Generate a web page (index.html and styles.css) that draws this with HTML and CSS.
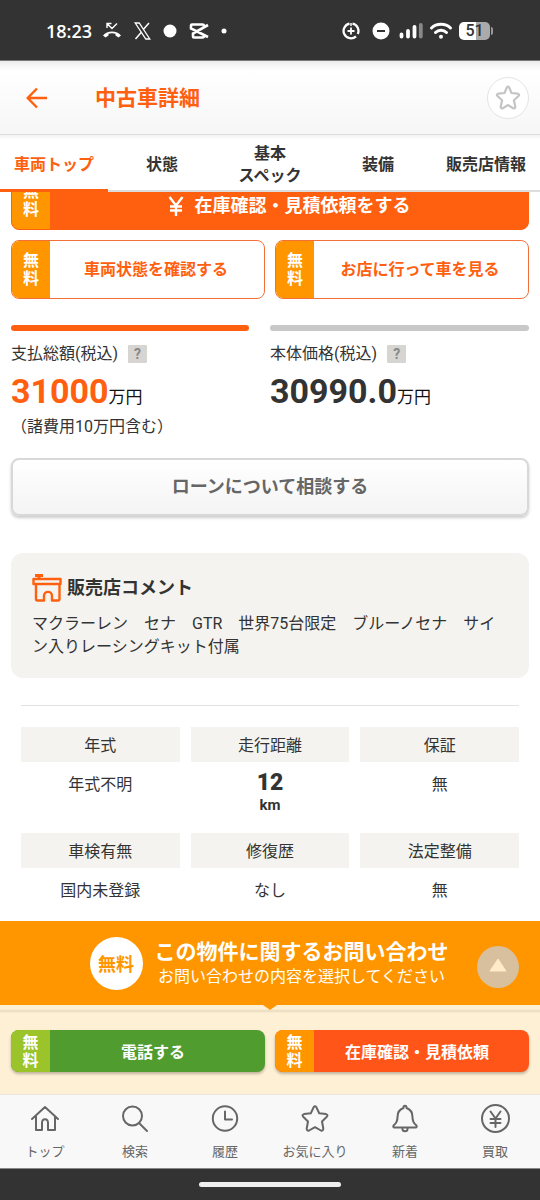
FILE: index.html
```html
<!DOCTYPE html>
<html lang="ja">
<head>
<meta charset="utf-8">
<meta name="viewport" content="width=device-width, initial-scale=1">
<title>中古車詳細</title>
<link rel="stylesheet" href="styles.css">
</head>
<body>
<div class="status">
  <div class="status-group status-left">
    <span class="clock">18:23</span>
    <svg width="20" height="18" viewBox="0 0 20 18" fill="none"><path d="M1 13.5C5 8.300 15 8.300 19 13.500L16.500 15.500L13.500 13.500V11.700C11.500 11 8.500 11 6.500 11.700V13.500L3.500 15.500Z" fill="#fff"/><path d="M15 1.500L10 6.500L5.500 2M5 6V1.500H9.500" stroke="#fff" stroke-width="1.400"/></svg>
    <svg width="17" height="18" viewBox="0 0 17 18" fill="none" stroke="#fff"><path d="M1.200 1H5.200L15.800 17H11.800Z" stroke-width="1.300"/><path d="M15 1L9.300 7.600M7.600 10L1.500 17" stroke-width="1.500"/></svg>
    <svg width="14" height="14" viewBox="0 0 14 14"><circle cx="7" cy="7" r="6.500" fill="#fff"/></svg>
    <svg width="20" height="18" viewBox="0 0 20 18" fill="none" stroke="#fff" stroke-width="2.600"><path d="M19 3L4 11.500V14.500Q4 15.500 5 15.500H13.500Q15 15.500 15 14V12.500M19 15L2 6.500V3.500Q2 2.500 3 2.500H13.500Q15 2.500 15 4V5.500"/></svg>
    <svg width="6" height="6" viewBox="0 0 6 6"><circle cx="3" cy="3" r="2.500" fill="#fff"/></svg>
  </div>
  <div class="status-group">
    <svg class="saver" width="18" height="18" viewBox="0 0 18 18" fill="none" stroke="#fff"><path d="M10.500 1.700A7.400 7.400 0 0 1 15.800 12M14 14.400A7.400 7.400 0 1 1 7.500 1.700" stroke-width="2.300"/><path d="M9 5.500V12.500M5.500 9H12.500" stroke-width="1.800"/><path d="M9 1V4" stroke-width="1.500"/></svg>
    <svg class="dnd" width="18" height="18" viewBox="0 0 18 18"><circle cx="9" cy="9" r="8.500" fill="#fff"/><path d="M5 9H13" stroke="#333" stroke-width="2"/></svg>
    <svg width="24" height="18" viewBox="0 0 24 18" fill="none" stroke-width="3.800" stroke-linecap="round"><path d="M2.500 12.500V14.500M9 9V14.500M15.500 5V14.500" stroke="#fff"/><path d="M21.800 3V14.500" stroke="#888"/></svg>
    <svg width="22" height="18" viewBox="0 0 22 18" fill="none" stroke="#fff" stroke-width="2.900" stroke-linecap="round"><path d="M1.500 6C6.500 1 15.500 1 20.500 6M5.500 10.500C8.500 7.500 13.500 7.500 16.500 10.500"/><circle cx="11" cy="14.800" r="1" fill="#fff" stroke-width="2"/></svg>
    <span class="battery">51</span>
  </div>
</div>

<header class="header">
  <button class="back" type="button" aria-label="戻る"><svg width="22" height="22" viewBox="0 0 22 22" fill="none" stroke="#ff6010" stroke-width="2.400"><path d="M21 11H2M11 1.500L1.700 11L11 20.500"/></svg></button>
  <h1 class="title">中古車詳細</h1>
  <button class="fav" type="button" aria-label="お気に入りに追加"><svg width="26" height="26" viewBox="0 0 26 26" fill="none" stroke="#c4c4c4" stroke-width="2.200"><path d="M11.900 2.400Q13 .9 14.100 2.400L16.500 8L22.800 8.700Q25 9.300 23.500 11L18.900 15.300L20.300 21.700Q20.300 24 18.200 23.300L13 20.100L7.800 23.300Q5.700 24 5.700 21.700L7.100 15.300L2.500 11Q1 9.300 3.200 8.700L9.500 8Z"/></svg></button>
</header>

<nav class="tabs">
  <a class="tab tab-active" href="#top">車両トップ</a>
  <a class="tab" href="#state">状態</a>
  <a class="tab" href="#spec">基本<br>スペック</a>
  <a class="tab" href="#equip">装備</a>
  <a class="tab" href="#shop">販売店情報</a>
</nav>

<main class="main" id="top">
  <div class="actions">
    <button class="cta cta-main" type="button"><span class="free">無<br>料</span><span class="cta-label"><svg width="16" height="20" viewBox="0 0 16 20" fill="none" stroke="#fff" stroke-width="2.400"><path d="M1.500 1L8 9.500L14.500 1M8 9.500V20M2 10.500H14M2 14.500H14"/></svg>在庫確認・見積依頼をする</span></button>
    <button class="cta cta-line" type="button"><span class="free">無<br>料</span><span class="cta-label">車両状態を確認する</span></button>
    <button class="cta cta-line" type="button"><span class="free">無<br>料</span><span class="cta-label">お店に行って車を見る</span></button>
  </div>

  <div class="prices">
    <section class="price price-total">
      <h2 class="price-name">支払総額(税込)<button class="help" type="button">?</button></h2>
      <p class="amount"><strong>31000</strong>万円</p>
      <p class="note">（諸費用10万円含む）</p>
    </section>
    <section class="price">
      <h2 class="price-name">本体価格(税込)<button class="help" type="button">?</button></h2>
      <p class="amount"><strong>30990.0</strong>万円</p>
    </section>
  </div>

  <button class="loan" type="button">ローンについて相談する</button>

  <section class="comment">
    <h2 class="comment-title"><svg width="30" height="28" viewBox="0 0 30 28" fill="none" stroke="#ff6010" stroke-width="2.400" stroke-linejoin="round"><path d="M1.500 5H28.500V10H1.500ZM4 10V25Q4 26.500 5.500 26.500H12V22C12 16.500 20 16.500 20 22V26.500H26Q27.500 26.500 27.500 25V10"/><path d="M3 1.500H11M7 1.500V5" stroke-width="3"/></svg>販売店コメント</h2>
    <p class="comment-text">マクラーレン　セナ　GTR　世界75台限定　ブルーノセナ　サイン入りレーシングキット付属</p>
  </section>

  <dl class="specs" id="spec">
    <div class="spec"><dt>年式</dt><dd>年式不明</dd></div>
    <div class="spec"><dt>走行距離</dt><dd class="mileage"><strong>12</strong><span>km</span></dd></div>
    <div class="spec"><dt>保証</dt><dd>無</dd></div>
    <div class="spec"><dt>車検有無</dt><dd>国内未登録</dd></div>
    <div class="spec"><dt>修復歴</dt><dd>なし</dd></div>
    <div class="spec"><dt>法定整備</dt><dd>無</dd></div>
  </dl>
</main>

<section class="inquiry">
  <div class="inquiry-head">
    <span class="badge">無料</span>
    <div class="inquiry-copy">
      <h2 class="inquiry-title">この物件に関するお問い合わせ</h2>
      <p class="inquiry-sub">お問い合わせの内容を選択してください</p>
    </div>
    <button class="to-top" type="button" aria-label="ページの先頭へ"><svg width="18" height="14" viewBox="0 0 18 14"><path d="M9 1L17 13H1Z" fill="#ffebc8" stroke="#ffebc8" stroke-linejoin="round"/></svg></button>
  </div>
  <div class="inquiry-body">
    <button class="cta cta-tel" type="button"><span class="free">無<br>料</span><span class="cta-label">電話する</span></button>
    <button class="cta cta-stock" type="button"><span class="free">無<br>料</span><span class="cta-label">在庫確認・見積依頼</span></button>
  </div>
</section>

<nav class="bottom-nav">
  <a class="nav-item" href="#home"><svg class="nav-icon" viewBox="0 0 30 30"><path d="M2 15L15 3L28 15M6 12V26H12V19C12 14 18 14 18 19V26H25V12"/></svg>トップ</a>
  <a class="nav-item" href="#search"><svg class="nav-icon" viewBox="0 0 30 30"><circle cx="12.500" cy="12" r="9.500"/><path d="M19 19L27 27"/></svg>検索</a>
  <a class="nav-item" href="#history"><svg class="nav-icon" viewBox="0 0 30 30"><circle cx="15" cy="14.500" r="12.200"/><path d="M15 7.500V15.500H22"/></svg>履歴</a>
  <a class="nav-item" href="#favorites"><svg class="nav-icon" viewBox="0 0 30 30"><path d="M13.700 3.100Q15 1.500 16.300 3.100L19.200 9.200L26 10.100Q28.400 10.800 26.800 12.700L22 17.500L23.300 24.500Q23.300 27.200 20.900 26.500L15 23.200L9.100 26.500Q6.700 27.200 6.700 24.500L8 17.500L3.200 12.700Q1.600 10.800 4 10.100L10.800 9.200Z"/></svg>お気に入り</a>
  <a class="nav-item" href="#new"><svg class="nav-icon" viewBox="0 0 30 30"><path d="M13.500 4V3.500C13.500 1 16.500 1 16.500 3.500V4C21 5.500 22.500 9 22.500 13C22.500 17 24 19.500 26 21C27.500 22.500 26.500 23.500 25.500 23.500H4.500C3.500 23.500 2.500 22.500 4 21C6 19.500 7.500 17 7.500 13C7.500 9 9 5.500 13.500 4ZM12.500 24V25C12.500 28 17.500 28 17.500 25V24"/></svg>新着</a>
  <a class="nav-item" href="#sell"><svg class="nav-icon" viewBox="0 0 30 30"><circle cx="15.500" cy="14.500" r="13.500"/><path d="M10.500 7.500L15.500 14.500L20.500 7.500M15.500 14.500V23M10.500 15H20.500M10.500 19H20.500"/></svg>買取</a>
</nav>
<div class="gesture"><span class="gesture-bar"></span></div>
</body>
</html>
```
FILE: styles.css
```css
* { box-sizing: border-box; }
body {
  margin: 0;
  min-height: 100vh;
  display: flex;
  flex-direction: column;
  background: #fff;
  color: #333;
  font: 16px/24px Roboto, "Noto Sans CJK JP", sans-serif;
}
h1, h2, p, dl, dd { margin: 0; }
button { font: inherit; color: inherit; border: 0; padding: 0; background: none; }
a { color: inherit; text-decoration: none; }
svg { display: block; flex: none; }

.status {
  display: flex;
  justify-content: space-between;
  align-items: center;
  height: 61px;
  padding: 2px 50px 0 46px;
  background: #333;
  border-bottom: 1px solid #777;
  color: #fff;
}
.status-group { display: flex; align-items: center; gap: 7px; }
.status-left { gap: 12px; }
.status-left .clock { margin-right: -2px; font: 600 18px/24px "Open Sans", sans-serif; }
.saver { margin-right: 5px; }
.dnd { margin-right: 2px; }
.battery {
  position: relative;
  width: 31px;
  height: 18px;
  border-radius: 5px;
  background: linear-gradient(90deg, #fff 54%, #aaa 54%);
  color: #333;
  font-size: 16px;
  font-weight: 500;
  line-height: 18px;
  text-align: center;
}
.battery::after {
  content: "";
  position: absolute;
  top: 5px;
  right: -3px;
  width: 2px;
  height: 8px;
  border-radius: 0 2px 2px 0;
  background: #999;
}

.header {
  display: flex;
  align-items: center;
  height: 74px;
  padding: 0 11px 0 26px;
  background: linear-gradient(#ececec, #fff 10px, #f6f6f6);
  border-bottom: 1px solid #ddd;
}
.title { flex: 1; margin-left: 47px; color: #ff6010; font-size: 21px; line-height: 30px; }
.fav {
  display: grid;
  place-items: center;
  width: 42px;
  height: 42px;
  border: 1px solid #e4e4e4;
  border-radius: 50%;
  background: #fff;
}

.tabs {
  display: grid;
  grid-template-columns: repeat(5, 1fr);
  height: 57px;
  background: linear-gradient(#f2f2f2, #fff 5px);
}
.tab {
  display: flex;
  align-items: center;
  justify-content: center;
  padding-top: 5px;
  border-bottom: 2px solid #ddd;
  font-weight: 700;
  line-height: 22px;
  text-align: center;
  white-space: nowrap;
}
.tab-active { border-bottom: 3px solid #ff6010; color: #ff6010; }

.main { flex: 1; overflow: hidden; padding: 0 11px; }
.actions {
  display: grid;
  grid-template-columns: 1fr 1fr;
  gap: 10px;
  margin-top: -20px;
}
.cta { display: flex; align-items: stretch; overflow: hidden; border-radius: 8px; font-weight: 700; }
.free {
  display: flex;
  align-items: center;
  justify-content: center;
  width: 38px;
  background: #ff9600;
  color: #fff;
  line-height: 18px;
}
.cta-label { flex: 1; align-self: center; display: flex; align-items: center; justify-content: center; gap: 11px; }
.cta-main {
  grid-column: 1 / -1;
  height: 58px;
  border: 1px solid #ff6010;
  background: #ff6010;
  color: #fff;
  font-size: 18px;
}
.cta-main .free { font-size: 16px; }
.cta-main .cta-label { padding-top: 9px; }
.cta-line { height: 59px; border: 1px solid #f4703a; color: #ff6010; }
.cta-line .cta-label { padding-right: 2px; }

.prices { display: flex; gap: 21px; margin-top: 26px; }
.price { flex: 260; }
.price-total { flex: 239; }
.price::before { content: ""; display: block; height: 6px; border-radius: 3px; background: #c8c8c8; }
.price-total::before { background: #ff6010; }
.price-name {
  display: flex;
  align-items: center;
  gap: 10px;
  margin-top: 11px;
  font-size: 16px;
  font-weight: 400;
}
.help {
  width: 19px;
  height: 18px;
  border-radius: 1px;
  background: #d6d5d1;
  color: #888;
  font-size: 14px;
  font-weight: 700;
  line-height: 18px;
}
.amount { margin-top: 5px; color: #111; font-size: 17px; line-height: 40px; }
.amount strong { color: #333; font-size: 34px; }
.price-total strong { color: #ff6010; }
.note { margin-top: -2px; }

.loan {
  display: block;
  width: 100%;
  height: 58px;
  margin-top: 19px;
  border: 2px solid #d8d8d8;
  border-radius: 8px;
  background: linear-gradient(#fff, #f4f4f4);
  box-shadow: 0 2px 3px #ccc;
  color: #666;
  font-size: 18px;
  font-weight: 700;
}

.comment { margin-top: 37px; padding: 20px 21px; border-radius: 12px; background: #f4f3ef; }
.comment-title { display: flex; align-items: center; gap: 5px; font-size: 18px; line-height: 30px; }
.comment-text { margin-top: 9px; line-height: 23px; }

.specs {
  display: grid;
  grid-template-columns: repeat(3, 1fr);
  gap: 18px 11px;
  margin: 27px 10px 0;
  padding-top: 21px;
  border-top: 1px solid #e2e2e2;
  text-align: center;
}
.spec dt { padding: 7px 0 4px; background: #f4f3ef; }
.spec dd { padding-top: 11px; }
.spec .mileage { padding-top: 9px; display: flex; flex-direction: column; font-weight: 700; font-size: 15px; line-height: 20px; }
.mileage strong { font-size: 23px; line-height: 24px; }

.inquiry { background: #fef0d5; }
.inquiry-head {
  position: relative;
  display: flex;
  align-items: center;
  justify-content: center;
  gap: 12px;
  height: 84px;
  padding-right: 2px;
  background: #ff9600;
  color: #fff;
}
.inquiry-head::after {
  content: "";
  position: absolute;
  top: 100%;
  left: 50%;
  margin-left: -7px;
  border: 7px solid transparent;
  border-top: 5px solid #ff9600;
  border-bottom: 0;
}
.badge {
  display: grid;
  place-items: center;
  width: 53px;
  height: 53px;
  padding-top: 3px;
  border-radius: 50%;
  background: #fff;
  color: #ff9600;
  font-size: 18px;
  font-weight: 700;
}
.inquiry-copy { padding-top: 2px; text-align: center; }
.inquiry-title { font-size: 21px; line-height: 26px; }
.inquiry-sub { line-height: 24px; }
.to-top {
  position: absolute;
  top: 25px;
  right: 21px;
  display: grid;
  place-items: center;
  width: 42px;
  height: 42px;
  padding-bottom: 4px;
  border-radius: 50%;
  background: #d8bf9d;
}
.inquiry-body {
  display: grid;
  grid-template-columns: 1fr 1fr;
  gap: 10px;
  padding: 25px 11px 22px;
  background: linear-gradient(#fef0d5 4px, #e8dac0 6px, #fef0d5 8px);
}
.inquiry-body .cta { height: 42px; color: #fff; box-shadow: 0 2px 3px #bdb29d; }
.inquiry-body .free { width: 39px; padding-top: 2px; }
.inquiry-body .cta-label { padding: 3px 9px 0 0; }
.cta-tel { background: #509c2e; }
.cta-tel .free { background: #9ac42a; }
.cta-stock { background: #ff5519; }

.bottom-nav {
  display: grid;
  grid-template-columns: repeat(6, 1fr);
  height: 74px;
  border-top: 1px solid #e8e5df;
  background: #f8f8f8;
}
.nav-item {
  display: flex;
  flex-direction: column;
  align-items: center;
  gap: 8px;
  padding-top: 9px;
  color: #666;
  font-size: 13px;
  line-height: 20px;
}
.nav-icon { width: 30px; height: 30px; fill: none; stroke: #666; stroke-width: 2; stroke-linejoin: round; stroke-linecap: round; }
.gesture { display: grid; place-items: center; height: 32px; background: #333; border-top: 1px solid #888; }
.gesture-bar { width: 142px; height: 5px; border-radius: 3px; background: #eee; }
```
